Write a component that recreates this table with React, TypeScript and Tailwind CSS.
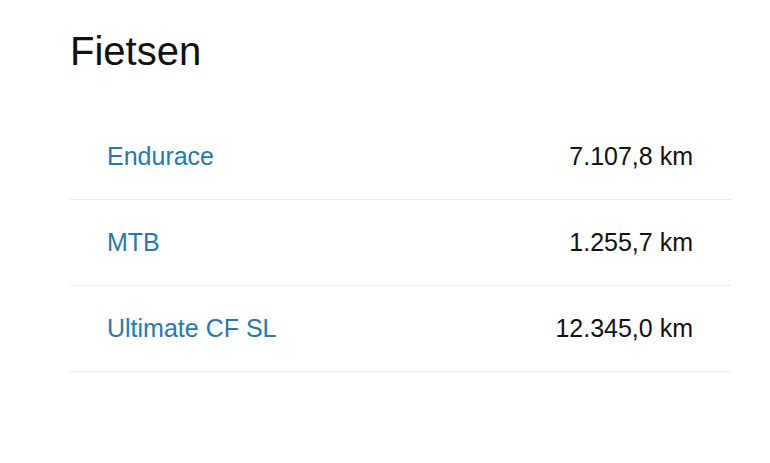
import * as React from "react";

const bikes = [
  { name: "Endurace", distance: "7.107,8 km" },
  { name: "MTB", distance: "1.255,7 km" },
  { name: "Ultimate CF SL", distance: "12.345,0 km" },
];

export default function App() {
  return (
    <div className="min-h-screen bg-white pl-[70px] pr-[39px] pt-[31px] font-['Liberation_Sans',Arial,sans-serif]">
      <h1 className="text-[40px] leading-[40px] text-[#111]">Fietsen</h1>

      <ul className="mt-[43px]">
        {bikes.map((bike) => (
          <li
            key={bike.name}
            className="flex h-[86px] items-center justify-between border-b border-[#ebebeb] pl-[37px] pr-[38px] text-[25px] leading-[25px]"
          >
            <a href="#" className="text-[#2a78a8]">
              {bike.name}
            </a>
            <span className="text-[#111]">{bike.distance}</span>
          </li>
        ))}
      </ul>
    </div>
  );
}
